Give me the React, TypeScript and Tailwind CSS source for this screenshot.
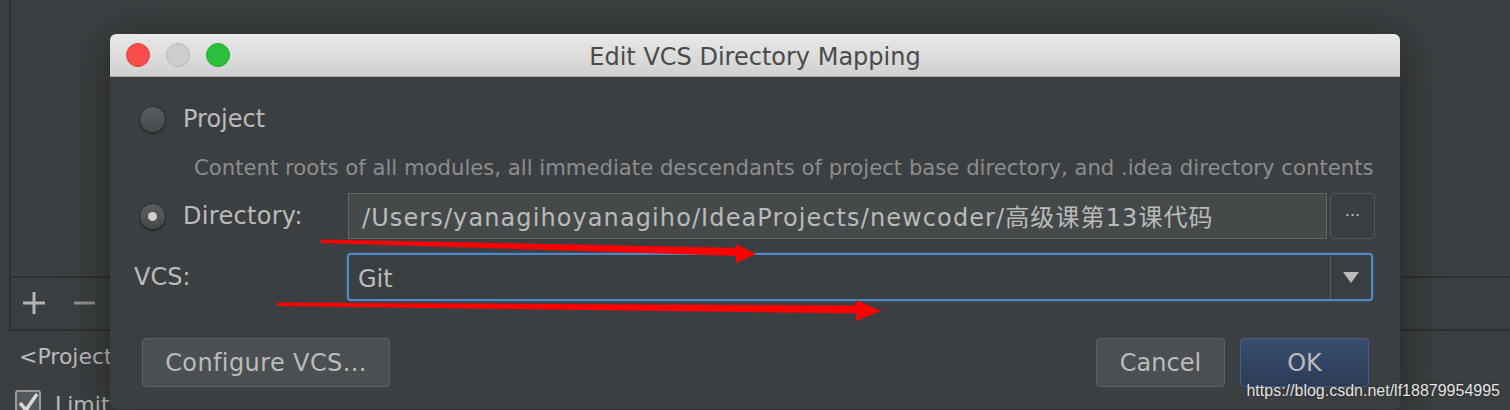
import React from "react";

function Radio({ checked }: { checked?: boolean }) {
  return (
    <div className="w-[27px] h-[27px] shrink-0 rounded-full border border-[#2a2c2e] bg-gradient-to-b from-[#5b5e61] to-[#46494b] shadow-[0_1px_1px_rgba(0,0,0,0.5)] flex items-center justify-center">
      {checked && <div className="w-[9px] h-[9px] rounded-full bg-[#cfcfcf]" />}
    </div>
  );
}

export default function App() {
  return (
    <div className="relative w-[1510px] h-[410px] overflow-hidden bg-[#3c3f41] font-['DejaVu_Sans',sans-serif]">
      {/* background IDE panel */}
      <div className="flex flex-col pl-[9px]">
        <div className="h-[331px] border-l-2 border-b-2 border-[#2d2f31] flex flex-col">
          <div className="h-[278px] border-b-2 border-[#2d2f31]" />
          <div className="flex items-center h-[50px] pl-[12px] gap-[29px]">
            <svg width="22" height="22" viewBox="0 0 22 22">
              <rect x="9.5" y="0" width="3" height="22" fill="#b4b4b4" />
              <rect x="0" y="9.5" width="22" height="3" fill="#b4b4b4" />
            </svg>
            <svg width="21" height="22" viewBox="0 0 21 22">
              <rect x="0" y="9.5" width="21" height="3" fill="#8e8e8e" />
            </svg>
          </div>
        </div>
        <div className="pl-[10px] pt-[12px] text-[22px] leading-[28px] text-[#bbbbbb]">&lt;Project&gt;</div>
        <div className="flex items-start gap-[14px] pl-[6px] pt-[19px]">
          <div className="w-[26px] h-[26px] shrink-0 rounded-[3px] border-2 border-[#9a9a9a] bg-[#55585a] flex items-center justify-center">
            <svg width="22" height="22" viewBox="0 0 22 22">
              <path d="M3 11 L9 18 L20 2" stroke="#d8d8d8" strokeWidth="3.5" fill="none" />
            </svg>
          </div>
          <span className="text-[22px] leading-[22px] pt-[4px] text-[#bbbbbb]">Limit</span>
        </div>
      </div>

      {/* dialog */}
      <div className="absolute left-[110px] top-[34px] w-[1290px] h-[375px] rounded-[6px] bg-[#3c3f41] shadow-[0_8px_45px_rgba(0,0,0,0.45)] flex flex-col">
        <div className="h-[43px] shrink-0 rounded-t-[6px] bg-gradient-to-b from-[#e9e9e9] to-[#d0d0d0] border-b border-[#a9a9a9] grid grid-cols-[1fr_auto_1fr] items-center">
          <div className="flex items-center gap-[16px] pl-[16px]">
            <div className="w-[24px] h-[24px] rounded-full bg-[#fc4d4d] border border-[#e0403f]" />
            <div className="w-[24px] h-[24px] rounded-full bg-[#cecece] border border-[#b5b5b5]" />
            <div className="w-[24px] h-[24px] rounded-full bg-[#2ac13d] border border-[#22a731]" />
          </div>
          <div className="pt-[4px] text-[24px] text-[#4a4a4a] leading-none">Edit VCS Directory Mapping</div>
          <div />
        </div>

        <div className="flex flex-col pl-[29px] pr-[25px] pt-[27px] text-[#bbbbbb]">
          {/* Project row */}
          <div className="h-[30px] flex items-center gap-[17px]">
            <Radio />
            <span className="text-[24px] leading-none">Project</span>
          </div>
          {/* description */}
          <div className="mt-[20px] h-[28px] flex items-center pl-[55px] text-[21.2px] text-[#8b8d8f] whitespace-nowrap">
            Content roots of all modules, all immediate descendants of project base directory, and .idea directory contents
          </div>
          {/* Directory row */}
          <div className="mt-[11px] h-[46px] flex items-center">
            <div className="w-[209px] shrink-0 flex items-center gap-[17px]">
              <Radio checked />
              <span className="text-[24px] leading-none tracking-[0.3px]">Directory:</span>
            </div>
            <div className="flex-1 h-[46px] border border-[#646565] bg-[#45494a] flex items-center pl-[13px] pt-[3px] text-[24px] tracking-[1.1px] whitespace-nowrap font-['DejaVu_Sans','Noto_Sans_CJK_SC',sans-serif]">
              /Users/yanagihoyanagiho/IdeaProjects/newcoder/高级课第13课代码
            </div>
            <div className="ml-[3px] w-[45px] h-[46px] rounded-[4px] border border-[#56595b] flex items-center justify-center text-[16px] text-[#bbbbbb]">
              ···
            </div>
          </div>
          {/* VCS row */}
          <div className="mt-[14px] h-[48px] flex items-center">
            <div className="w-[208px] -ml-[5px] shrink-0 text-[24px] leading-none">VCS:</div>
            <div className="ml-[5px] mr-[2px] flex-1 h-[48px] rounded-[4px] border-[2.5px] border-[#4c89c8] shadow-[0_0_2px_rgba(76,137,200,0.7)] bg-[#3b3e40] flex items-center">
              <div className="flex-1 pl-[9px] pt-[3px] text-[24px] leading-none">Git</div>
              <div className="w-[41px] h-full border-l border-[#5b5e60] flex items-center justify-center">
                <svg width="16" height="11" viewBox="0 0 16 11">
                  <path d="M0 0 L16 0 L8 11 Z" fill="#bbbbbb" />
                </svg>
              </div>
            </div>
          </div>
          {/* buttons */}
          <div className="mt-[37px] flex items-center">
            <div className="ml-[3px] w-[248px] h-[49px] rounded-[4px] border border-[#5e6264] bg-[#4b4f51] flex items-center justify-center text-[24px] leading-none tracking-[0.4px]">
              Configure VCS...
            </div>
            <div className="flex-1" />
            <div className="w-[129px] h-[49px] rounded-[4px] border border-[#5e6264] bg-[#4b4f51] flex items-center justify-center text-[24px] leading-none">
              Cancel
            </div>
            <div className="ml-[15px] mr-[6px] w-[129px] h-[49px] rounded-[4px] border border-[#4a5e7e] bg-gradient-to-b from-[#384d6d] to-[#2b3c58] flex items-center justify-center text-[24px] leading-none">
              OK
            </div>
          </div>
        </div>
      </div>

      {/* red annotation arrows */}
      <svg className="absolute left-0 top-0 pointer-events-none" width="1510" height="410" viewBox="0 0 1510 410">
        <polygon points="321,239.5 740,248 740,256 321,243" fill="#ff0000" />
        <polygon points="736,244 756,254 736,263" fill="#ff0000" />
        <polygon points="277,302.5 862,305.5 862,313.5 277,306" fill="#ff0000" />
        <polygon points="856,300 881,311 856,321" fill="#ff0000" />
      </svg>

      {/* watermark */}
      <div className="absolute right-[10px] top-[380px] text-[16px] leading-[22px] text-[#e6e6e6] font-['Liberation_Sans',sans-serif] [text-shadow:0_0_2px_rgba(0,0,0,0.6)]">
        https://blog.csdn.net/lf18879954995
      </div>
    </div>
  );
}
